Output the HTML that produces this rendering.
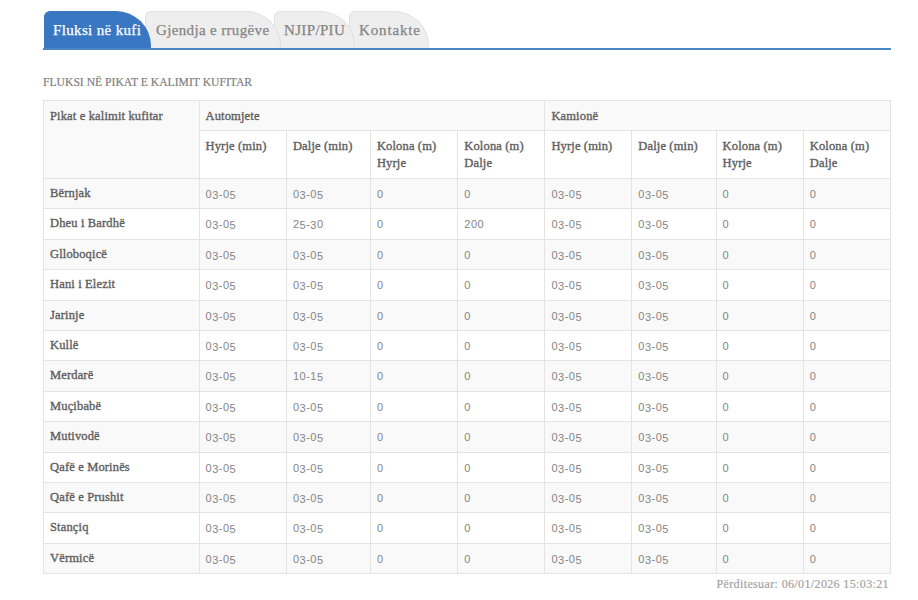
<!DOCTYPE html>
<html>
<head>
<meta charset="utf-8">
<style>
html,body{margin:0;padding:0;background:#fff;}
body{width:918px;height:600px;position:relative;overflow:hidden;font-family:"Liberation Serif",serif;}
.tabbar{position:absolute;left:43px;top:48px;width:848px;height:2px;background:#4b86c9;}
.tab{position:absolute;top:11px;height:37px;box-sizing:border-box;background:#eee;border:1px solid #e0e0e0;border-bottom:none;
  border-radius:6px 35px 0 0;font-size:15px;letter-spacing:0.35px;color:#858585;-webkit-text-stroke:0.25px currentColor;white-space:nowrap;}
.tab span{position:absolute;top:10px;}
.tab.active{background:#3a77c2;border-color:#3a77c2;color:#fff;}
.h{position:absolute;left:43px;top:76px;font-size:11.65px;color:#808080;-webkit-text-stroke:0.2px currentColor;white-space:nowrap;}
table{position:absolute;left:43px;top:100px;width:847px;border-collapse:collapse;table-layout:fixed;}
td,th{border:1px solid #e3e3e3;padding:0 6px;text-align:left;vertical-align:top;box-sizing:border-box;}
th{font-weight:normal;font-size:12.5px;letter-spacing:0.15px;-webkit-text-stroke:0.35px #5e5e5e;color:#5e5e5e;line-height:17px;}
td{font-family:"Liberation Sans",sans-serif;font-size:11px;color:#858585;letter-spacing:0.5px;}
td.l{font-family:"Liberation Serif",serif;font-weight:normal;font-size:12.5px;letter-spacing:0.15px;-webkit-text-stroke:0.35px #5e5e5e;color:#5e5e5e;}
tr.g td, tr.g th{background:#f9f9f9;}
.r1 th{height:30px;padding-top:7px;}
.r2 th{height:48px;padding-top:6.5px;}
tbody tr{height:30.41px;}
tbody td{padding-top:9px;}
tbody td.l{padding-top:7px;}
td i{font-style:normal;position:relative;top:1px;}
.upd{position:absolute;right:29px;top:577px;font-size:12px;letter-spacing:0.37px;color:#a3a3a3;-webkit-text-stroke:0.2px currentColor;white-space:nowrap;}
</style>
</head>
<body>
<div class="tabbar"></div>
<div class="tab" style="left:349px;width:80px;z-index:1"><span style="left:9px;letter-spacing:0.85px">Kontakte</span></div>
<div class="tab" style="left:274px;width:81px;z-index:2"><span style="left:9px">NJIP/PIU</span></div>
<div class="tab" style="left:145px;width:136px;z-index:3"><span style="left:10px">Gjendja e rrugëve</span></div>
<div class="tab active" style="left:44px;width:107px;z-index:4"><span style="left:8px">Fluksi në kufi</span></div>

<div class="h">FLUKSI NË PIKAT E KALIMIT KUFITAR</div>

<table>
<colgroup>
<col style="width:155.5px"><col style="width:87.4px"><col style="width:84px"><col style="width:87.4px"><col style="width:87.1px"><col style="width:86.9px"><col style="width:84.3px"><col style="width:87.2px"><col style="width:87.2px">
</colgroup>
<thead>
<tr class="g r1"><th rowspan="2" style="vertical-align:top">Pikat e kalimit kufitar</th><th colspan="4">Automjete</th><th colspan="4">Kamionë</th></tr>
<tr class="r2"><th>Hyrje (min)</th><th>Dalje (min)</th><th>Kolona (m)<br>Hyrje</th><th>Kolona (m)<br>Dalje</th><th>Hyrje (min)</th><th>Dalje (min)</th><th>Kolona (m)<br>Hyrje</th><th>Kolona (m)<br>Dalje</th></tr>
</thead>
<tbody>
<tr class="g"><td class="l">Bërnjak</td><td>0<i>3</i>-0<i>5</i></td><td>0<i>3</i>-0<i>5</i></td><td>0</td><td>0</td><td>0<i>3</i>-0<i>5</i></td><td>0<i>3</i>-0<i>5</i></td><td>0</td><td>0</td></tr>
<tr><td class="l">Dheu i Bardhë</td><td>0<i>3</i>-0<i>5</i></td><td>2<i>5</i>-<i>3</i>0</td><td>0</td><td>200</td><td>0<i>3</i>-0<i>5</i></td><td>0<i>3</i>-0<i>5</i></td><td>0</td><td>0</td></tr>
<tr class="g"><td class="l">Glloboqicë</td><td>0<i>3</i>-0<i>5</i></td><td>0<i>3</i>-0<i>5</i></td><td>0</td><td>0</td><td>0<i>3</i>-0<i>5</i></td><td>0<i>3</i>-0<i>5</i></td><td>0</td><td>0</td></tr>
<tr><td class="l">Hani i Elezit</td><td>0<i>3</i>-0<i>5</i></td><td>0<i>3</i>-0<i>5</i></td><td>0</td><td>0</td><td>0<i>3</i>-0<i>5</i></td><td>0<i>3</i>-0<i>5</i></td><td>0</td><td>0</td></tr>
<tr class="g"><td class="l">Jarinje</td><td>0<i>3</i>-0<i>5</i></td><td>0<i>3</i>-0<i>5</i></td><td>0</td><td>0</td><td>0<i>3</i>-0<i>5</i></td><td>0<i>3</i>-0<i>5</i></td><td>0</td><td>0</td></tr>
<tr><td class="l">Kullë</td><td>0<i>3</i>-0<i>5</i></td><td>0<i>3</i>-0<i>5</i></td><td>0</td><td>0</td><td>0<i>3</i>-0<i>5</i></td><td>0<i>3</i>-0<i>5</i></td><td>0</td><td>0</td></tr>
<tr class="g"><td class="l">Merdarë</td><td>0<i>3</i>-0<i>5</i></td><td>10-1<i>5</i></td><td>0</td><td>0</td><td>0<i>3</i>-0<i>5</i></td><td>0<i>3</i>-0<i>5</i></td><td>0</td><td>0</td></tr>
<tr><td class="l">Muçibabë</td><td>0<i>3</i>-0<i>5</i></td><td>0<i>3</i>-0<i>5</i></td><td>0</td><td>0</td><td>0<i>3</i>-0<i>5</i></td><td>0<i>3</i>-0<i>5</i></td><td>0</td><td>0</td></tr>
<tr class="g"><td class="l">Mutivodë</td><td>0<i>3</i>-0<i>5</i></td><td>0<i>3</i>-0<i>5</i></td><td>0</td><td>0</td><td>0<i>3</i>-0<i>5</i></td><td>0<i>3</i>-0<i>5</i></td><td>0</td><td>0</td></tr>
<tr><td class="l">Qafë e Morinës</td><td>0<i>3</i>-0<i>5</i></td><td>0<i>3</i>-0<i>5</i></td><td>0</td><td>0</td><td>0<i>3</i>-0<i>5</i></td><td>0<i>3</i>-0<i>5</i></td><td>0</td><td>0</td></tr>
<tr class="g"><td class="l">Qafë e Prushit</td><td>0<i>3</i>-0<i>5</i></td><td>0<i>3</i>-0<i>5</i></td><td>0</td><td>0</td><td>0<i>3</i>-0<i>5</i></td><td>0<i>3</i>-0<i>5</i></td><td>0</td><td>0</td></tr>
<tr><td class="l">Stançiq</td><td>0<i>3</i>-0<i>5</i></td><td>0<i>3</i>-0<i>5</i></td><td>0</td><td>0</td><td>0<i>3</i>-0<i>5</i></td><td>0<i>3</i>-0<i>5</i></td><td>0</td><td>0</td></tr>
<tr class="g"><td class="l">Vërmicë</td><td>0<i>3</i>-0<i>5</i></td><td>0<i>3</i>-0<i>5</i></td><td>0</td><td>0</td><td>0<i>3</i>-0<i>5</i></td><td>0<i>3</i>-0<i>5</i></td><td>0</td><td>0</td></tr>
</tbody>
</table>

<div class="upd">Përditesuar: 06/01/2026 15:03:21</div>
</body>
</html>
